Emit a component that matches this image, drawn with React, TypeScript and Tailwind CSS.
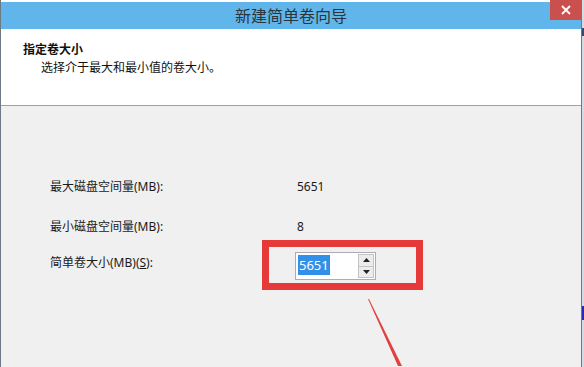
export default function App() {
  return (
    <div
      className="w-[584px] h-[367px] flex overflow-hidden bg-white"
      style={{ fontFamily: '"Noto Sans", "Noto Sans CJK SC", sans-serif' }}
    >
      <div className="w-[582px] h-full flex flex-col border-l border-r border-[#6c7986] pt-[2px] bg-white">
        {/* title bar */}
        <div className="relative h-[27px] bg-[#60b6ea] flex items-center justify-center">
          <span className="text-[16px] leading-none text-[#2e3338]">新建简单卷向导</span>
          <div className="absolute right-0 top-[-2px] w-[31px] h-[20px] bg-[#c9504d] flex items-center justify-center">
            <svg width="10" height="10" viewBox="0 0 10 10">
              <path d="M1 1 L9 9 M9 1 L1 9" stroke="#fff" strokeWidth="1.8" />
            </svg>
          </div>
        </div>

        {/* header */}
        <div className="h-[77px] bg-white border-b border-[#a0a0a0] pl-[22px] pt-[12px] text-[12px] leading-[18px] text-[#111]">
          <div className="font-bold">指定卷大小</div>
          <div className="pl-[18px]">选择介于最大和最小值的卷大小。</div>
        </div>

        {/* body */}
        <div className="relative flex-1 bg-[#f0f0f0] pl-[49px] pt-[72px] text-[12px] leading-[18px] text-[#1a1a1a]">
          <div className="flex">
            <div className="w-[245px]">最大磁盘空间量(MB):</div>
            <div className="pl-[2px]">5651</div>
          </div>
          <div className="flex mt-[22px]">
            <div className="w-[245px]">最小磁盘空间量(MB):</div>
            <div className="pl-[2px]">8</div>
          </div>
          <div className="flex mt-[16px] items-start">
            <div className="w-[245px] mt-[2px]">
              简单卷大小(MB)(<span className="underline">S</span>):
            </div>
            <div className="w-[81px] h-[28px] border border-[#abadb3] bg-white flex">
              <div className="flex-1 pl-[2px] pt-[2px]">
                <span className="inline-block bg-[#3390e8] text-white text-[13px] leading-[20px] px-[1px]">5651</span>
              </div>
              <div className="w-[16px] flex flex-col mr-[1px] my-[1px]">
                <div className="flex-1 border border-[#c4c4c4] bg-[#ececec] flex items-center justify-center">
                  <svg width="7" height="4" viewBox="0 0 7 4">
                    <path d="M0 4 L3.5 0 L7 4 Z" fill="#222" />
                  </svg>
                </div>
                <div className="flex-1 border border-t-0 border-[#c4c4c4] bg-[#ececec] flex items-center justify-center">
                  <svg width="7" height="4" viewBox="0 0 7 4">
                    <path d="M0 0 L3.5 4 L7 0 Z" fill="#222" />
                  </svg>
                </div>
              </div>
            </div>
          </div>

          {/* annotation */}
          <div className="absolute left-[261px] top-[134px] w-[161px] h-[50px] border-[7px] border-[#e63a3a]" />
          <svg className="absolute left-[360px] top-[190px]" width="50" height="70" viewBox="0 0 50 70">
            <path d="M7 3 L8 3 L41 70 L37 70 Z" fill="#e04040" />
          </svg>
        </div>
      </div>
      <div className="flex-1 h-full bg-[#d4dbe2] flex flex-col">
        <div className="h-[28px]" />
        <div className="h-[8px] bg-[#3a4a6a]" />
        <div className="h-[270px]" />
        <div className="h-[14px] bg-[#2a2ab8]" />
      </div>
    </div>
  );
}
